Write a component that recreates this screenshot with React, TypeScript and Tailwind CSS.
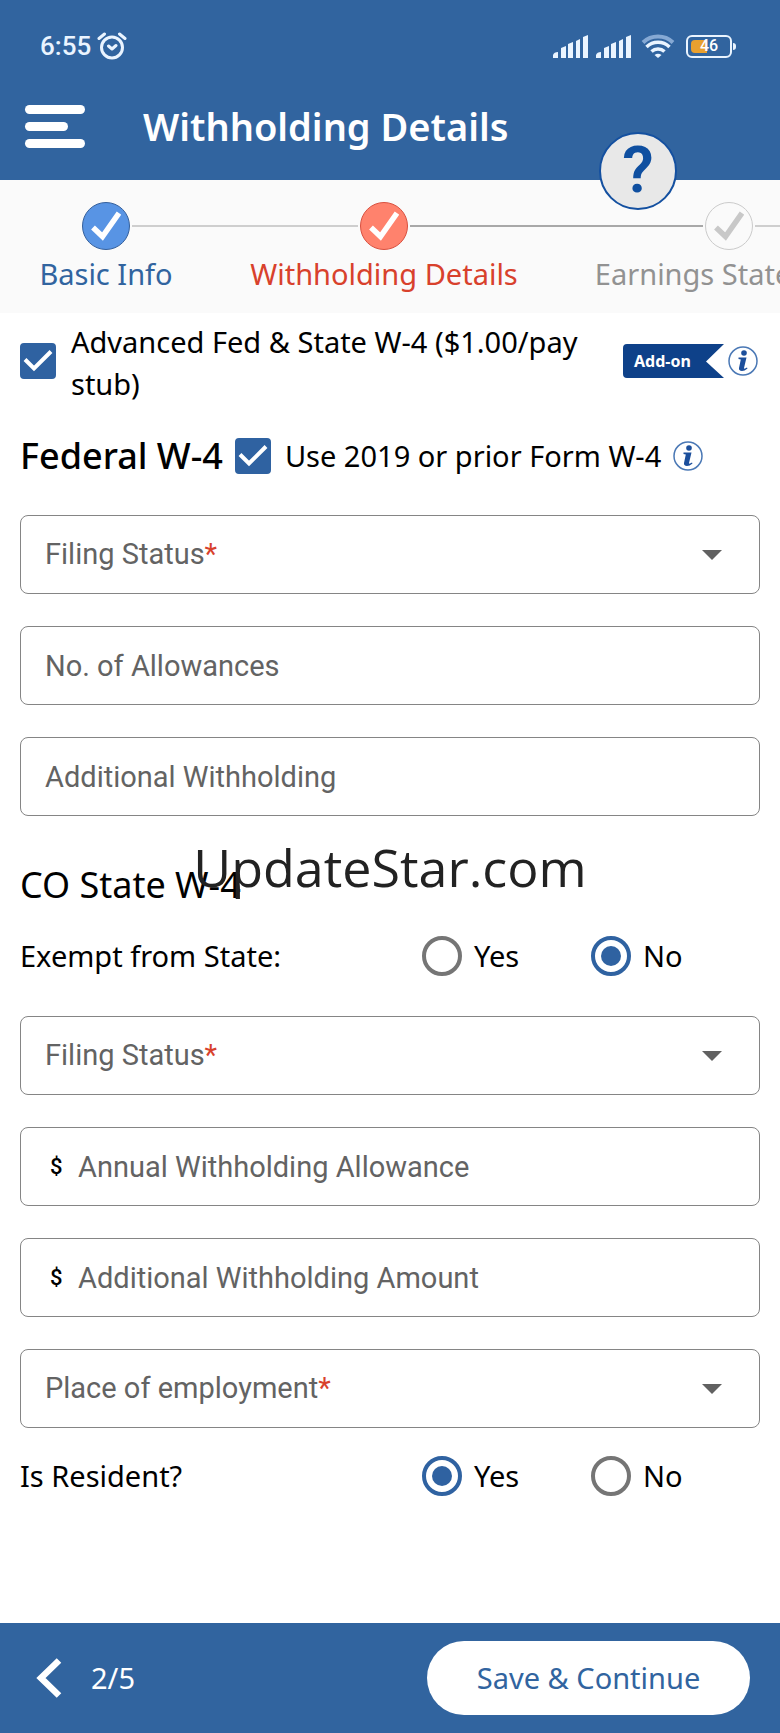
import { ReactNode } from "react";
import clsx from "clsx";

interface StepProps {
  label: string;
  width: string;
  circle: string;
  text: string;
  before: string;
  after: string;
}

const steps: StepProps[] = [
  {
    label: "Basic Info",
    width: "w-[212px]",
    circle: "border-[#35609c] bg-[#5894e4] text-white",
    text: "text-[#31649f]",
    before: "bg-transparent",
    after: "bg-[#cecece]",
  },
  {
    label: "Withholding Details",
    width: "w-[344px]",
    circle: "border-[#d9503f] bg-[#ff826d] text-white",
    text: "text-[#d8412c]",
    before: "bg-[#cecece]",
    after: "bg-[#a8a8a8]",
  },
  {
    label: "Earnings Statement",
    width: "w-[346px]",
    circle: "border-[#cbcbcb] bg-[#fafafa] text-[#c8c8c8]",
    text: "text-[#929292]",
    before: "bg-[#a8a8a8]",
    after: "bg-[#cecece]",
  },
];

function Signal() {
  return (
    <svg viewBox="0 0 35 23" className="h-[23px] w-[35px]" fill="#eaf4ff">
      <path d="M0 23v-3q1-3 5-3v6zM8 13l5-2v12H8zM15 9l5-2v16h-5zM23 6l4-2v19h-4zM30 2l5-2v23h-5z" />
    </svg>
  );
}

function StatusBar() {
  return (
    <div className="flex h-[92px] items-center justify-between pl-10 pr-11">
      <div className="flex items-center gap-1.5 font-['Roboto',sans-serif] text-[26px] font-medium text-[#eaf4ff]">
        6:55
        <svg
          viewBox="0 0 30 28"
          className="h-7 w-[30px]"
          fill="none"
          stroke="#eaf4ff"
          strokeWidth="3"
          strokeLinecap="round"
          strokeLinejoin="round"
        >
          <circle cx="15" cy="15.500" r="10.500" />
          <path d="M2 6.500 7.500 2M28 6.500 22.500 2M11.500 14l3.500 3 4-3.500" />
        </svg>
      </div>
      <div className="flex items-center gap-2">
        <Signal />
        <Signal />
        <svg
          viewBox="0 0 34 24"
          className="ml-0.5 h-6 w-[34px]"
          fill="none"
          stroke="#eaf4ff"
          strokeWidth="3.500"
        >
          <path d="M2 8.500a22 22 0 0 1 30 0" stroke="#86a9d4" strokeWidth="4" />
          <path d="M5.500 13a16.500 16.500 0 0 1 23 0M10.500 17.500a9.500 9.500 0 0 1 13 0" />
          <path d="M13.500 21q3.500-2.500 7 0L17 24z" fill="#eaf4ff" stroke="none" />
        </svg>
        <div className="flex items-center gap-px pl-[3px]">
          <div className="relative flex h-[23px] w-[46px] items-center justify-center rounded-md border-2 border-[#eaf4ff] font-['Roboto',sans-serif] text-base font-medium text-white">
            <span className="absolute bottom-[3px] left-[3px] top-[3px] w-4 rounded-l-sm bg-[#e9a02f]" />
            <span className="relative">46</span>
          </div>
          <span className="h-[7px] w-[3px] rounded-r bg-[#eaf4ff]" />
        </div>
      </div>
    </div>
  );
}

function Step({ label, width, circle, text, before, after }: StepProps) {
  return (
    <li className={clsx("shrink-0", width)}>
      <div className="flex items-center gap-0.5">
        <span className={clsx("h-0.5 flex-1", before)} />
        <span
          className={clsx(
            "flex size-12 items-center justify-center rounded-full border",
            circle
          )}
        >
          <svg
            viewBox="0 0 30 30"
            className="size-[30px]"
            fill="none"
            stroke="currentColor"
            strokeWidth="5.500"
          >
            <path d="M2 16.500 11.500 25.500 28 2" />
          </svg>
        </span>
        <span className={clsx("h-0.5 flex-1", after)} />
      </div>
      <p className={clsx("mt-1 whitespace-nowrap text-center leading-10", text)}>
        {label}
      </p>
    </li>
  );
}

function Checkbox({ id }: { id: string }) {
  return (
    <span className="grid size-9 shrink-0">
      <input
        id={id}
        type="checkbox"
        defaultChecked
        className="peer col-start-1 row-start-1 size-9 appearance-none rounded border-2 border-[#2f62a1] checked:bg-[#2f62a1]"
      />
      <svg
        viewBox="0 0 36 36"
        className="pointer-events-none invisible col-start-1 row-start-1 size-9 peer-checked:visible"
        fill="none"
        stroke="white"
        strokeWidth="4"
      >
        <path d="M5 16.500 14 25.500 31 8.500" />
      </svg>
    </span>
  );
}

function InfoButton({ label }: { label: string }) {
  return (
    <button type="button" aria-label={label} className="shrink-0">
      <svg viewBox="0 0 30 30" className="size-[30px]">
        <circle cx="15" cy="15" r="14" fill="#fff" stroke="#4a78b5" strokeWidth="1.500" />
        <circle cx="16" cy="7" r="2.800" fill="#1c4f9c" />
        <path
          d="M10.500 11.500h8l-2.500 10.500q0 1.500 3-.5l.5 1q-3 2.500-5.500 2.500-3.500-.3-3-3l1.800-8.500-2.300-.5z"
          fill="#1c4f9c"
        />
      </svg>
    </button>
  );
}

function SelectField({ label }: { label: string }) {
  return (
    <label className="grid h-[79px] items-center rounded-lg border border-[#858585] font-['Roboto',sans-serif] text-[#636363]">
      <span className="col-start-1 row-start-1 px-6">
        {label}
        <span className="text-[#d8412c]">*</span>
      </span>
      <select className="col-start-1 row-start-1 h-full w-full appearance-none bg-transparent px-6">
        <option value=""></option>
      </select>
      <svg
        viewBox="0 0 20 10"
        className="pointer-events-none col-start-1 row-start-1 mr-[37px] h-2.5 w-5 justify-self-end"
        fill="#616161"
      >
        <path d="M0 0h20L10 10z" />
      </svg>
    </label>
  );
}

function TextField({ label, money }: { label: string; money?: boolean }) {
  return (
    <label className="flex h-[79px] items-center rounded-lg border border-[#858585] font-['Roboto',sans-serif]">
      {money && (
        <span className="w-[33px] pl-[29px] text-[22px] font-medium text-black">
          $
        </span>
      )}
      <input
        type="text"
        aria-label={label}
        placeholder={label}
        className="h-full w-full bg-transparent px-6 outline-none placeholder:text-[#636363]"
      />
    </label>
  );
}

function Radio({
  name,
  label,
  checked,
}: {
  name: string;
  label: string;
  checked?: boolean;
}) {
  return (
    <label className="flex w-[169px] items-center gap-3">
      <input
        type="radio"
        name={name}
        defaultChecked={checked}
        className="grid size-10 appearance-none place-items-center rounded-full border-4 border-[#757575] checked:border-[#2f62a1] checked:before:size-5 checked:before:rounded-full checked:before:bg-[#2f62a1] checked:before:content-['']"
      />
      {label}
    </label>
  );
}

function RadioRow({ legend, children }: { legend: string; children: ReactNode }) {
  return (
    <div role="radiogroup" aria-label={legend} className="flex h-10 items-center">
      <span className="flex-1">{legend}</span>
      <div className="flex">{children}</div>
    </div>
  );
}

export default function App() {
  return (
    <div className="relative flex min-h-screen flex-col overflow-hidden bg-white font-['Noto_Sans',sans-serif] text-[29px] text-black">
      <header className="relative h-[180px] bg-[#31649f] text-white">
        <StatusBar />
        <div className="flex items-center gap-[58px] pl-[25px]">
          <button type="button" aria-label="Menu" className="flex flex-col gap-2">
            <span className="h-[9px] w-[60px] rounded-full bg-white" />
            <span className="h-[9px] w-[43px] rounded-full bg-white" />
            <span className="h-[9px] w-[60px] rounded-full bg-white" />
          </button>
          <h1 className="text-[38px] font-semibold leading-[68px]">
            Withholding Details
          </h1>
        </div>
        <button
          type="button"
          aria-label="Help"
          className="absolute -bottom-[30px] right-[103px] z-10 flex size-[78px] items-center justify-center rounded-full border-2 border-[#1450a0] bg-[#e8e8e8] font-['Roboto',sans-serif] text-[64px] font-semibold text-[#0f4fa0]"
        >
          ?
        </button>
      </header>

      <ol className="flex h-[133px] overflow-hidden bg-[#fafafa] pt-[22px]">
        {steps.map((step) => (
          <Step key={step.label} {...step} />
        ))}
      </ol>

      <form className="flex flex-1 flex-col px-5 pb-10 pt-1">
        <div className="flex items-center">
          <Checkbox id="advanced" />
          <label htmlFor="advanced" className="ml-[15px] flex-1 pt-1 leading-[42px]">
            Advanced Fed &amp; State W-4 ($1.00/pay stub)
          </label>
          <span className="ml-5 grid h-[34px] w-[101px] items-center text-base font-bold text-white">
            <svg
              viewBox="0 0 101 34"
              className="col-start-1 row-start-1 h-[34px] w-[101px]"
              fill="#0e4189"
            >
              <path d="M4 0h97L83 17.500 101 34H4q-4 0-4-4V4q0-4 4-4z" />
            </svg>
            <span className="col-start-1 row-start-1 pl-[11px]">Add-on</span>
          </span>
          <span className="ml-1 mr-0.5 flex">
            <InfoButton label="About the add-on" />
          </span>
        </div>

        <div className="mt-[21px] flex h-[60px] items-center">
          <h2 className="text-[36px] font-medium">Federal W-4</h2>
          <span className="ml-3 flex">
            <Checkbox id="prior" />
          </span>
          <label htmlFor="prior" className="ml-[14px]">
            Use 2019 or prior Form W-4
          </label>
          <span className="ml-3 flex">
            <InfoButton label="About Form W-4" />
          </span>
        </div>

        <div className="mt-[29px] flex flex-col gap-8">
          <SelectField label="Filing Status" />
          <TextField label="No. of Allowances" />
          <TextField label="Additional Withholding" />
        </div>

        <h2 className="mt-11 text-[36px] leading-[50px]">CO State W-4</h2>
        <div className="mt-[26px]">
          <RadioRow legend="Exempt from State:">
            <Radio name="exempt" label="Yes" />
            <Radio name="exempt" label="No" checked />
          </RadioRow>
        </div>

        <div className="mt-10 flex flex-col gap-8">
          <SelectField label="Filing Status" />
          <TextField label="Annual Withholding Allowance" money />
          <TextField label="Additional Withholding Amount" money />
          <SelectField label="Place of employment" />
        </div>

        <div className="mt-7">
          <RadioRow legend="Is Resident?">
            <Radio name="resident" label="Yes" checked />
            <Radio name="resident" label="No" />
          </RadioRow>
        </div>
      </form>

      <footer className="flex h-[110px] items-center justify-between bg-[#31649f] pl-9 pr-[30px] text-white">
        <div className="flex items-center gap-[29px]">
          <button type="button" aria-label="Back">
            <svg
              viewBox="0 0 26 40"
              className="h-10 w-[26px]"
              fill="none"
              stroke="white"
              strokeWidth="6.500"
            >
              <path d="M23 2.500 5 20 23 37.500" />
            </svg>
          </button>
          <span>2/5</span>
        </div>
        <button
          type="button"
          className="h-[74px] w-[323px] rounded-full bg-white text-[#31649f]"
        >
          Save &amp; Continue
        </button>
      </footer>

      <div className="pointer-events-none absolute inset-0 flex items-center justify-center font-['Open_Sans',sans-serif] text-[52px] text-[#222222]">
        UpdateStar.com
      </div>
    </div>
  );
}
